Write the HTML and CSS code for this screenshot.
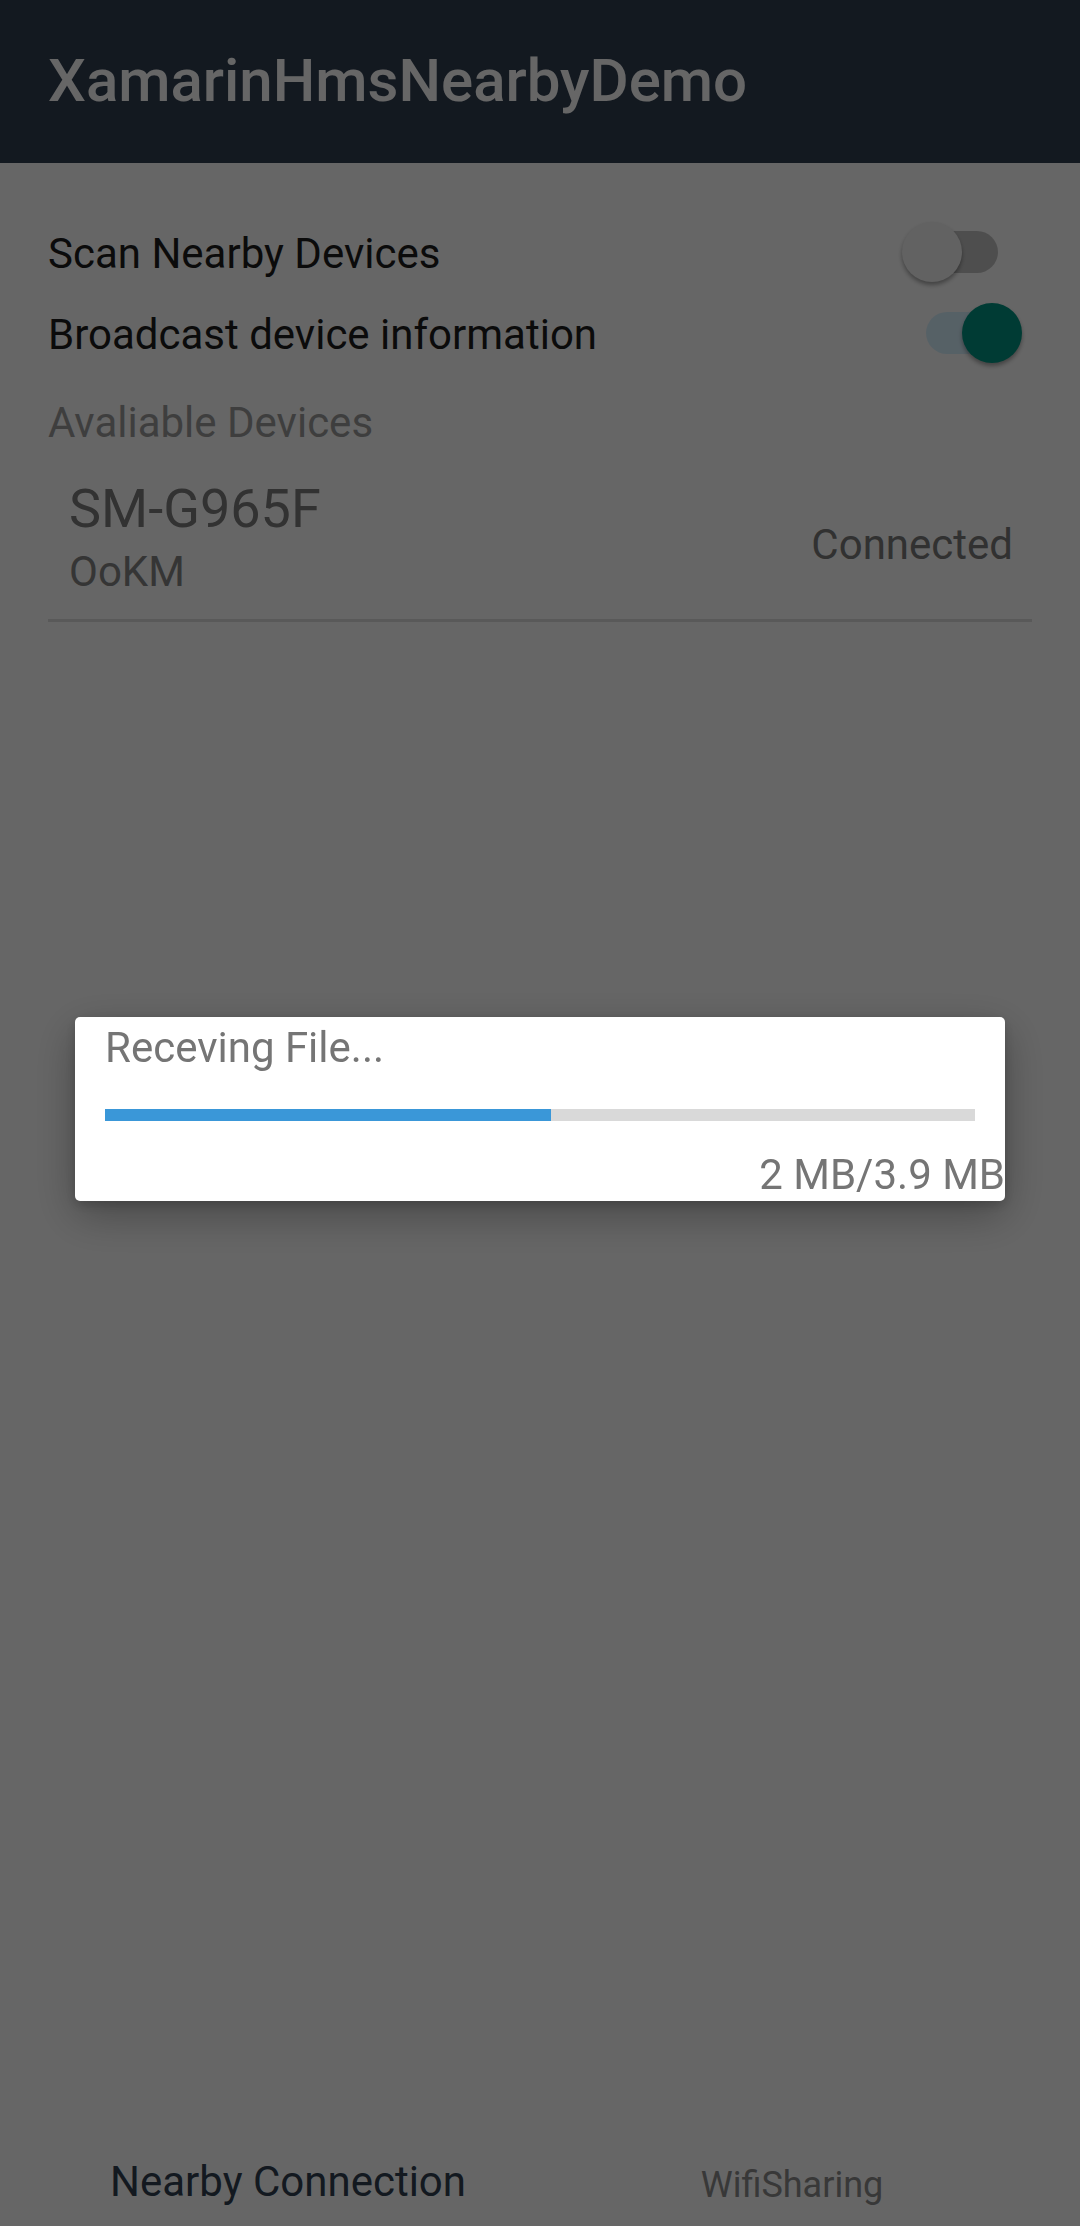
FILE: index.html
```html
<!DOCTYPE html>
<html lang="en">
<head>
<meta charset="utf-8">
<title>XamarinHmsNearbyDemo</title>
<link rel="stylesheet" href="styles.css">
</head>
<body>
<div class="app">
  <header class="appbar">
    <h1 class="appbar-title">XamarinHmsNearbyDemo</h1>
  </header>
  <main class="content">
    <div class="row">
      <span class="row-label">Scan Nearby Devices</span>
      <span class="switch switch-off switch-scan"><span class="thumb"></span></span>
    </div>
    <div class="row">
      <span class="row-label">Broadcast device information</span>
      <span class="switch switch-on switch-broadcast"><span class="thumb"></span></span>
    </div>
    <div class="section-title">Avaliable Devices</div>
    <div class="device">
      <div class="device-info">
        <div class="device-name">SM-G965F</div>
        <div class="device-id">OoKM</div>
      </div>
      <div class="device-status">Connected</div>
    </div>
    <div class="divider"></div>
  </main>
  <nav class="bottom-nav">
    <div class="tab tab-active">Nearby Connection</div>
    <div class="tab">WifiSharing</div>
  </nav>
</div>
<div class="scrim">
  <div class="dialog">
    <div class="dialog-title">Receving File...</div>
    <div class="progress"><div class="progress-fill" style="width: 51.3%"></div></div>
    <div class="dialog-amount">2 MB/3.9 MB</div>
  </div>
</div>
</body>
</html>
```
FILE: styles.css
```css
* { box-sizing: border-box; }
html, body { margin: 0; padding: 0; }
body {
  width: 1080px;
  height: 2226px;
  background: #ffffff;
  font-family: Roboto, "Noto Sans", "Liberation Sans", sans-serif;
  overflow: hidden;
}
.app {
  height: 2226px;
  display: flex;
  flex-direction: column;
}
.appbar {
  height: 163px;
  background: #313f51;
  display: flex;
  align-items: center;
  padding-left: 48px;
  flex-shrink: 0;
}
.appbar-title {
  margin: 0;
  font-size: 60px;
  font-weight: 500;
  color: #ffffff;
  line-height: 1.172;
  letter-spacing: 0;
}
.content {
  flex: 1;
  padding: 48px 48px 0 48px;
}
.row {
  height: 81px;
  display: flex;
  align-items: center;
  justify-content: space-between;
}
.row-label {
  font-size: 42px;
  color: #1c1c1c;
  line-height: 1.172;
  position: relative;
  top: 2px;
}
.switch {
  position: relative;
  width: 87px;
  height: 42px;
  border-radius: 21px;
}
.switch .thumb {
  position: absolute;
  top: -9px;
  width: 60px;
  height: 60px;
  border-radius: 50%;
  box-shadow: 0 3px 4px rgba(0, 0, 0, 0.35);
}
.switch-off { background: #c4c4c4; }
.switch-off .thumb { left: -9px; background: #f4f4f4; }
.switch-on { background: #d8f2ff; }
.switch-on .thumb { right: -9px; background: #009582; }
.switch-scan { margin-right: 34px; }
.switch-broadcast { margin-right: 19px; }
.section-title {
  margin-top: 25px;
  font-size: 42px;
  line-height: 1.172;
  color: #9c9c9c;
}
.device {
  margin-top: 30px;
  padding: 0 19px 0 21px;
  display: flex;
  align-items: center;
  justify-content: space-between;
}
.device-name {
  font-size: 54px;
  line-height: 1.172;
  color: #7d7d7d;
}
.device-id {
  margin-top: 6px;
  font-size: 42px;
  line-height: 1.172;
  color: #858585;
}
.device-status {
  font-size: 42px;
  line-height: 1.172;
  color: #7a7a7a;
  position: relative;
  top: 8px;
}
.divider {
  margin-top: 23px;
  height: 3px;
  background: #dedede;
}
.bottom-nav {
  height: 168px;
  display: flex;
  justify-content: center;
  align-items: flex-end;
  padding-bottom: 20px;
  flex-shrink: 0;
}
.tab {
  width: 504px;
  text-align: center;
  font-size: 36px;
  line-height: 1.172;
  color: #8c8c8c;
}
.tab-active {
  font-size: 42px;
  color: #313f51;
}
.scrim {
  position: fixed;
  inset: 0;
  background: rgba(0, 0, 0, 0.6);
  display: flex;
  align-items: center;
  justify-content: center;
  padding-bottom: 8px;
}
.dialog {
  width: 930px;
  background: #ffffff;
  border-radius: 5px;
  padding: 6px 0 2px 30px;
  box-shadow: 0 14px 44px rgba(0, 0, 0, 0.3), 0 4px 12px rgba(0, 0, 0, 0.18);
  display: flex;
  flex-direction: column;
}
.dialog-title {
  font-size: 42px;
  line-height: 1.172;
  color: #757575;
}
.progress {
  margin-top: 36px;
  margin-right: 30px;
  height: 12px;
  background: #d9d9d9;
}
.progress-fill {
  height: 100%;
  background: #3a97d8;
}
.dialog-amount {
  margin-top: 29px;
  font-size: 42px;
  line-height: 1.172;
  color: #757575;
  text-align: right;
}
```
